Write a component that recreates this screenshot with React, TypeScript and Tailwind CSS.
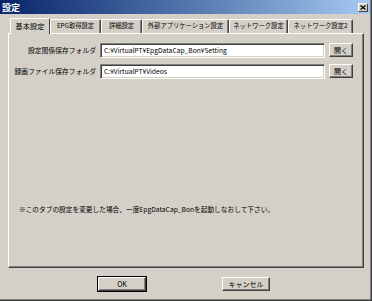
import type { ReactNode } from 'react'

const font = { fontFamily: '"Noto Sans CJK JP", "Liberation Sans", sans-serif' }

const tabs = [
    { label: '基本設定', w: 'w-[40px]' },
    { label: 'EPG取得設定', w: 'w-[51px]' },
    { label: '詳細設定', w: 'w-[41px]' },
    { label: '外部アプリケーション設定', w: 'w-[87px]' },
    { label: 'ネットワーク設定', w: 'w-[59px]' },
    { label: 'ネットワーク設定2', w: 'w-[65px]' },
]

function Button({ children, wide, isDefault }: { children: ReactNode; wide?: boolean; isDefault?: boolean }) {
    return (
        <div className={isDefault ? 'border border-black' : 'border border-transparent'}>
            <div
                className={`flex ${wide ? 'h-[14px] w-[48px]' : 'h-[14px] w-[24px]'} items-center justify-center border-t border-l border-t-white border-l-white border-r border-b border-r-[#404040] border-b-[#404040] bg-[#d4d0c8] text-[7px] leading-none text-black shadow-[inset_-1px_-1px_0_#808080]`}
            >
                {children}
            </div>
        </div>
    )
}

function PathRow({ label, value }: { label: string; value: string }) {
    return (
        <div className="flex items-center">
            <div className="w-[87px] text-right text-[6.8px] leading-none text-black">{label}</div>
            <div className="ml-[4px] flex h-[15px] w-[225px] items-center border-t border-l border-t-[#808080] border-l-[#808080] border-r border-b border-r-white border-b-white bg-white pl-[3px] text-[6.7px] leading-none text-black shadow-[inset_1px_1px_0_#404040,inset_-1px_-1px_0_#d4d0c8]">
                {value}
            </div>
            <div className="ml-[3px]">
                <Button>開く</Button>
            </div>
        </div>
    )
}

export default function App() {
    return (
        <div
            className="flex h-[301px] w-[372px] flex-col overflow-hidden border-r border-b border-r-[#404040] border-b-[#404040] bg-[#d4d0c8]"
            style={font}
        >
            <div className="flex h-full flex-col border-r border-b border-r-[#808080] border-b-[#808080]">
                {/* title bar */}
                <div className="flex h-[14px] items-center justify-between bg-gradient-to-r from-[#0a246a] to-[#a6caf0] pl-[2px] pr-[2px]">
                    <span className="text-[9px] font-bold leading-none text-white">設定</span>
                    <div className="flex h-[9px] w-[10px] items-center justify-center border-t border-l border-t-white border-l-white border-r border-b border-r-[#404040] border-b-[#404040] bg-[#d4d0c8]">
                        <svg width="6" height="5" viewBox="0 0 6 5">
                            <path d="M0.5 0.5 L5.5 4.5 M5.5 0.5 L0.5 4.5" stroke="black" strokeWidth="1.2" />
                        </svg>
                    </div>
                </div>

                {/* tabs */}
                <div className="mt-[4px] flex items-end pl-[10px]">
                    {tabs.map((t, i) =>
                        i === 0 ? (
                            <div
                                key={t.label}
                                className={`relative z-10 -mb-px flex h-[16px] ${t.w} items-center justify-center rounded-t-[2px] border-t border-l border-t-white border-l-white border-r border-r-[#404040] bg-[#d4d0c8] text-[7.2px] leading-none text-black`}
                            >
                                {t.label}
                            </div>
                        ) : (
                            <div
                                key={t.label}
                                className={`flex h-[14px] ${t.w} items-center justify-center rounded-t-[2px] border-t border-l border-t-white border-l-white border-r border-r-[#404040] text-[6.3px] leading-none text-black shadow-[inset_-1px_0_0_#808080]`}
                            >
                                {t.label}
                            </div>
                        )
                    )}
                </div>

                {/* panel */}
                <div className="ml-[8px] flex h-[235px] w-[356px] flex-col border-t border-l border-t-white border-l-white border-r border-b border-r-[#404040] border-b-[#404040] shadow-[inset_-1px_-1px_0_#808080]">
                    <div className="mt-[8px] flex flex-col gap-[5px]">
                        <PathRow label="設定関係保存フォルダ" value="C:¥VirtualPT¥EpgDataCap_Bon¥Setting" />
                        <PathRow label="録画ファイル保存フォルダ" value="C:¥VirtualPT¥Videos" />
                    </div>
                    <div className="ml-[10px] mt-[127px] text-[6.7px] leading-none text-black">
                        ※このタブの設定を変更した場合、一度EpgDataCap_Bonを起動しなおして下さい。
                    </div>
                </div>

                {/* dialog buttons */}
                <div className="mt-[8px] flex justify-center gap-[74px] pr-[2px]">
                    <Button wide isDefault>OK</Button>
                    <Button wide>キャンセル</Button>
                </div>
            </div>
        </div>
    )
}
